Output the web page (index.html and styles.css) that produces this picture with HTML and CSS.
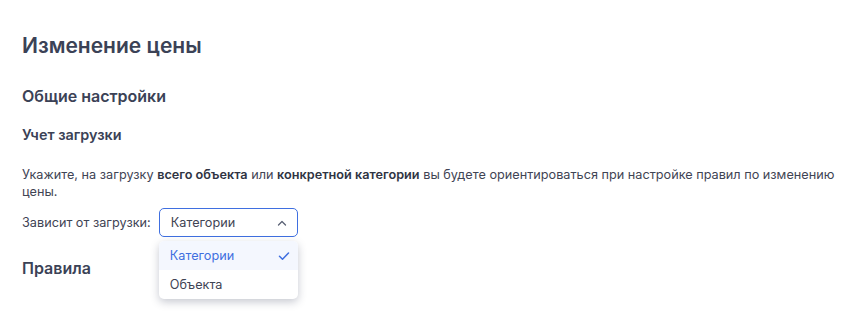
FILE: index.html
```html
<!DOCTYPE html>
<html lang="ru">
<head>
    <meta charset="UTF-8">
    <meta name="viewport" content="width=device-width, initial-scale=1.0">
    <title>Изменение цены</title>
    <link rel="stylesheet" href="styles.css">
</head>
<body>
    <div class="page">
        <h1 class="title">Изменение цены</h1>
        <h2 class="section">Общие настройки</h2>
        <h3 class="subsection">Учет загрузки</h3>
        <p class="hint">Укажите, на загрузку <b>всего объекта</b> или <b>конкретной категории</b> вы будете ориентироваться при настройке правил по изменению цены.</p>
        <div class="field">
            <span class="field-label">Зависит от загрузки:</span>
            <div class="select">
                <div class="select-box">
                    <span>Категории</span>
                    <svg class="chevron" width="10" height="6" viewBox="0 0 10 6"><path d="M1.5 5L5 1.5L8.5 5" fill="none" stroke="#5b6275" stroke-width="1.3" stroke-linecap="round" stroke-linejoin="round"/></svg>
                </div>
                <ul class="select-menu">
                    <li class="option option-active">
                        <span>Категории</span>
                        <svg width="12" height="10" viewBox="0 0 12 10"><path d="M1.5 5.2L4.5 8.2L10.5 2" fill="none" stroke="#3f6fe0" stroke-width="1.5" stroke-linecap="round" stroke-linejoin="round"/></svg>
                    </li>
                    <li class="option">Объекта</li>
                </ul>
            </div>
        </div>
        <h2 class="section rules">Правила</h2>
    </div>
</body>
</html>
```

FILE: styles.css
```css
html{
    box-sizing: border-box;
    font-family: Inter, "Noto Sans", sans-serif;
    color: #3b4256;
}
*, *::before, *::after{
    box-sizing: inherit;
}
body{
    margin: 0;
    min-height: 328px;
    background: #fff;
}
.page{
    padding: 31px 12px 0 22px;
}
.title{
    margin: 0;
    font-size: 21px;
    line-height: 30px;
    font-weight: 600;
}
.section{
    margin: 24px 0 0;
    font-size: 16px;
    line-height: 22px;
    font-weight: 600;
}
.subsection{
    margin: 18px 0 0;
    font-size: 14.4px;
    line-height: 20px;
    font-weight: 600;
}
.hint{
    margin: 21px 0 0;
    font-size: 12.7px;
    line-height: 17px;
    color: #3f4454;
}
.hint b{
    font-weight: 600;
    color: #2f3443;
}
.field{
    display: flex;
    align-items: center;
    gap: 8px;
    margin-top: 8px;
    font-size: 12.7px;
}
.field-label{
    color: #3f4454;
}
.select{
    position: relative;
    width: 139px;
}
.select-box{
    display: flex;
    align-items: center;
    justify-content: space-between;
    height: 29px;
    padding: 0 10px 0 11px;
    border: 1px solid #3f6fe0;
    border-radius: 5px;
    color: #3f4454;
}
.select-menu{
    position: absolute;
    top: 33px;
    left: 0;
    width: 139px;
    margin: 0;
    padding: 0;
    list-style: none;
    background: #fff;
    border-radius: 5px;
    box-shadow: 0 3px 8px rgba(30, 40, 70, 0.25);
    overflow: hidden;
    z-index: 2;
}
.option{
    display: flex;
    align-items: center;
    justify-content: space-between;
    height: 29px;
    padding: 0 8px 0 11px;
    color: #3f4454;
}
.option-active{
    background: #f4f7fe;
    color: #3f6fe0;
}
.rules{
    margin-top: 20px;
}
```
